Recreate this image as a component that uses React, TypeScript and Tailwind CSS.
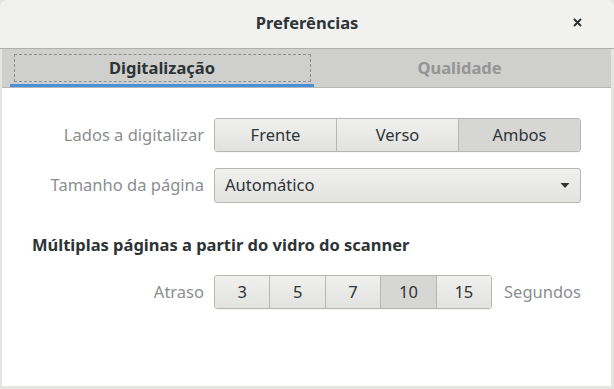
const font = { fontFamily: '"Noto Sans", "Open Sans", sans-serif' };

function Segmented({ items, active, width }: { items: string[]; active: string; width: string }) {
  return (
    <div className={`flex h-[34px] ${width} rounded-[3px] border border-[#b6b6b3] overflow-hidden shadow-[0_1px_0_rgba(0,0,0,0.04)]`}>
      {items.map((it, i) => (
        <div
          key={it}
          className={`flex-1 flex items-center justify-center text-[16.5px] text-[#2e3436] ${
            i > 0 ? "border-l border-[#b6b6b3]" : ""
          } ${it === active ? "bg-[#d6d6d5]" : "bg-gradient-to-b from-[#f0f0ef] to-[#e2e2e0]"}`}
        >
          {it}
        </div>
      ))}
    </div>
  );
}

export default function App() {
  return (
    <div className="w-[614px] h-[389px] bg-[#e4e4e3] flex flex-col" style={font}>
      {/* titlebar */}
      <div className="h-[49px] shrink-0 bg-[#f1f1f0] rounded-t-[7px] border-b border-[#b0b0ad] relative flex items-center justify-center">
        <span className="text-[16.5px] font-bold text-[#2e3436] -mt-[2px]">Preferências</span>
        <svg className="absolute left-[573px] top-[18px]" width="9" height="9" viewBox="0 0 9 9">
          <path d="M1 1 L8 8 M8 1 L1 8" stroke="#2e3436" strokeWidth="2" />
        </svg>
      </div>

      <div className="flex-1 flex flex-col pl-[2px] pr-[3px] pb-[3px]">
        {/* tabs */}
        <div className="h-[39px] shrink-0 bg-[#cfcfcd] border-b border-[#b6b6b3] flex pl-[8px] pr-[6px]">
          <div className="w-[304px] relative flex items-center justify-center pt-[3px] border-b-[3px] border-[#4a90d9]">
            <div className="absolute left-[4px] right-[3px] top-[5px] bottom-[2px] border border-dashed border-[#8e8e8e]" />
            <span className="text-[16.5px] font-bold text-[#2e3436]">Digitalização</span>
          </div>
          <div className="flex-1 flex items-center justify-center">
            <span className="text-[16.5px] font-bold text-[#959595]">Qualidade</span>
          </div>
        </div>

        {/* content */}
        <div className="flex-1 bg-white pl-[30px] pr-[30px] pt-[30px]">
          <div className="flex items-center">
            <div className="w-[182px] shrink-0 text-right text-[16.5px] text-[#8b8e8f] pr-[10px] whitespace-nowrap">Lados a digitalizar</div>
            <Segmented items={["Frente", "Verso", "Ambos"]} active="Ambos" width="w-[367px]" />
          </div>
          <div className="flex items-center mt-[16px]">
            <div className="w-[182px] shrink-0 text-right text-[16.5px] text-[#8b8e8f] pr-[10px] whitespace-nowrap">Tamanho da página</div>
            <div className="w-[367px] h-[35px] rounded-[3px] border border-[#b6b6b3] bg-gradient-to-b from-[#f0f0ef] to-[#e2e2e0] flex items-center justify-between pl-[10px] pr-[10px]">
              <span className="text-[16.5px] text-[#2e3436]">Automático</span>
              <svg width="10" height="5" viewBox="0 0 10 5">
                <path d="M0.5 0 L9.5 0 L5 5 Z" fill="#2e3436" />
              </svg>
            </div>
          </div>

          <div className="mt-[30px] text-[16.5px] font-bold text-[#2e3436] leading-[24px]">
            Múltiplas páginas a partir do vidro do scanner
          </div>

          <div className="flex items-center mt-[18px]">
            <div className="w-[182px] shrink-0 text-right text-[16.5px] text-[#8b8e8f] pr-[10px]">Atraso</div>
            <Segmented items={["3", "5", "7", "10", "15"]} active="10" width="w-[279px]" />
            <div className="ml-[12px] text-[16.5px] text-[#8b8e8f]">Segundos</div>
          </div>
        </div>
      </div>
    </div>
  );
}
